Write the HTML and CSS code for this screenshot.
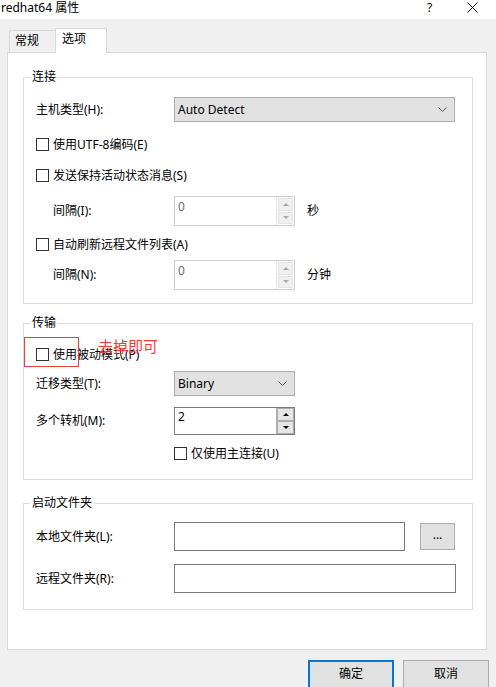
FILE: index.html
```html
<!DOCTYPE html>
<html lang="zh-CN">
<head>
<meta charset="utf-8">
<title>redhat64 属性</title>
<link rel="stylesheet" href="styles.css">
</head>
<body>
<div class="titlebar">
  <span class="title">redhat64 属性</span>
  <span class="help">?</span>
  <span class="close"><svg width="11" height="11" viewBox="0 0 11 11"><path d="M0.5 0.5 L10.5 10.5 M10.5 0.5 L0.5 10.5" stroke="#000" stroke-width="1" fill="none"/></svg></span>
</div>
<div class="tabs">
  <div class="tab">常规</div>
  <div class="tab active">选项</div>
</div>
<div class="panel">
  <div class="group g1">
    <div class="legend">连接</div>
    <div class="row r-a">
      <span class="lbl">主机类型(H):</span>
      <div class="combo combo-wide"><span>Auto Detect</span><svg class="chev" width="9" height="5" viewBox="0 0 9 5"><path d="M0.5 0.5 L4.5 4.5 L8.5 0.5" stroke="#555" fill="none"/></svg></div>
    </div>
    <div class="row chk r-b"><span class="cb"></span><span>使用UTF-8编码(E)</span></div>
    <div class="row chk r-c"><span class="cb"></span><span>发送保持活动状态消息(S)</span></div>
    <div class="row sub r-d">
      <span class="lbl2">间隔(I):</span>
      <div class="spin disabled"><div class="spin-text">0</div><div class="spin-btns"><span class="sb up"></span><span class="sb down"></span></div></div>
      <span class="unit">秒</span>
    </div>
    <div class="row chk r-e"><span class="cb"></span><span>自动刷新远程文件列表(A)</span></div>
    <div class="row sub r-f">
      <span class="lbl2">间隔(N):</span>
      <div class="spin disabled"><div class="spin-text">0</div><div class="spin-btns"><span class="sb up"></span><span class="sb down"></span></div></div>
      <span class="unit">分钟</span>
    </div>
  </div>

  <div class="group g2">
    <div class="legend">传输</div>
    <div class="row chk r-p"><span class="cb"></span><span>使用被动模式(P)</span></div>
    <div class="row r-t">
      <span class="lbl">迁移类型(T):</span>
      <div class="combo combo-small"><span>Binary</span><svg class="chev" width="9" height="5" viewBox="0 0 9 5"><path d="M0.5 0.5 L4.5 4.5 L8.5 0.5" stroke="#555" fill="none"/></svg></div>
    </div>
    <div class="row r-m">
      <span class="lbl">多个转机(M):</span>
      <div class="spin enabled"><div class="spin-text">2</div><div class="spin-btns"><span class="sb up"></span><span class="sb down"></span></div></div>
    </div>
    <div class="row chk r-u"><span class="cb"></span><span>仅使用主连接(U)</span></div>
    <div class="note-box"></div>
    <div class="note-text">去掉即可</div>
  </div>

  <div class="group g3">
    <div class="legend">启动文件夹</div>
    <div class="row r-l">
      <span class="lbl">本地文件夹(L):</span>
      <div class="field field-l"></div>
      <button class="browse">...</button>
    </div>
    <div class="row r-r">
      <span class="lbl">远程文件夹(R):</span>
      <div class="field field-r"></div>
    </div>
  </div>
</div>
<div class="buttons">
  <button class="btn primary">确定</button>
  <button class="btn">取消</button>
</div>
</body>
</html>
```

FILE: styles.css
```css
* { box-sizing: border-box; }
html, body { margin: 0; padding: 0; }
body {
  width: 496px;
  height: 687px;
  overflow: hidden;
  background: #f0f0f0;
  font-family: "Noto Sans", "Noto Sans CJK SC", sans-serif;
  font-size: 12px;
  line-height: 16px;
  color: #000;
}

.titlebar {
  height: 19px;
  background: #fff;
  display: flex;
  align-items: center;
  padding-left: 1px;
}
.title { flex: 1; margin-top: -3px; }
.help { width: 14px; margin-right: 26px; margin-top: -4px; font-size: 12px; }
.close { width: 11px; margin-right: 18px; margin-top: -5px; display: flex; }

.tabs {
  display: flex;
  align-items: flex-end;
  margin: 9px 0 0 9px;
  height: 24px;
  position: relative;
  z-index: 1;
}
.tab {
  height: 22px;
  width: 46px;
  border: 1px solid #d9d9d9;
  border-right: none;
  border-bottom: none;
  background: #f0f0f0;
  padding: 2px 0 0 5px;
}
.tab.active {
  height: 25px;
  width: 52px;
  border-right: 1px solid #d9d9d9;
  background: #fff;
  margin-bottom: -1px;
  padding: 2px 0 0 6px;
}

.panel {
  margin-left: 7px;
  width: 480px;
  height: 598px;
  background: #fff;
  border: 1px solid #d9d9d9;
  overflow: hidden;
}

.group {
  position: relative;
  margin-left: 15px;
  width: 450px;
  border: 1px solid #dcdcdc;
}
.g1 { margin-top: 24px; height: 227px; }
.g2 { margin-top: 19px; height: 157px; }
.g3 { margin-top: 23px; height: 107px; }

.legend {
  width: fit-content;
  margin: -9px 0 0 6px;
  padding: 0 2px;
  height: 16px;
  background: #fff;
}

.row {
  display: flex;
  align-items: center;
  padding-left: 12px;
}
.lbl { width: 138px; }
.lbl2 { width: 121px; }
.sub { padding-left: 29px; }
.chk { height: 17px; }
.cb {
  width: 13px;
  height: 13px;
  border: 1px solid #333;
  background: #fff;
  margin-right: 4px;
}

.r-a { margin-top: 12px; }
.r-b { margin-top: 14px; }
.r-c { margin-top: 14px; }
.r-d { margin-top: 12px; }
.r-e { margin-top: 10px; }
.r-f { margin-top: 7px; }

.r-p { margin-top: 15px; }
.r-t { margin-top: 8px; }
.r-m { margin-top: 11px; }
.r-u { margin-top: 10px; padding-left: 150px; }

.r-l { margin-top: 11px; }
.r-r { margin-top: 13px; }

.combo {
  height: 25px;
  background: #e1e1e1;
  border: 1px solid #adadad;
  display: flex;
  align-items: center;
  padding: 0 7px 0 3px;
}
.combo span { flex: 1; }
.combo-wide { width: 281px; }
.combo-small { width: 121px; }
.chev { display: block; }

.spin {
  display: flex;
  width: 121px;
  height: 30px;
  border: 1px solid #cccccc;
  background: #fff;
}
.spin.enabled { height: 28px; border-color: #7a7a7a; }
.spin-text {
  flex: 1;
  padding: 2px 0 0 3px;
  color: #6d6d6d;
}
.spin.enabled .spin-text { color: #000; padding-top: 1px; }
.spin-btns {
  width: 18px;
  display: flex;
  flex-direction: column;
  gap: 1px;
  padding: 1px;
  border-left: 1px solid #e3e3e3;
  background: #fff;
}
.spin.enabled .spin-btns { border-left-color: #b0b0b0; padding: 0; gap: 0; }
.sb {
  flex: 1;
  display: flex;
  align-items: center;
  justify-content: center;
  background: #f0f0f0;
  border: 1px solid #e3e3e3;
}
.spin.enabled .sb { background: #e5e5e5; border-color: #adadad; }
.sb::before {
  content: "";
  width: 0;
  height: 0;
  border-left: 3px solid transparent;
  border-right: 3px solid transparent;
}
.sb.up::before { border-bottom: 3px solid #a8a8a8; }
.sb.down::before { border-top: 3px solid #a8a8a8; }
.spin.enabled .sb.up::before { border-bottom-color: #000; }
.spin.enabled .sb.down::before { border-top-color: #000; }

.unit { margin-left: 12px; }

.field {
  height: 29px;
  border: 1px solid #7a7a7a;
  background: #fff;
}
.field-l { width: 231px; }
.field-r { width: 282px; }
.browse {
  margin-left: 15px;
  width: 35px;
  height: 27px;
  background: #e1e1e1;
  border: 1px solid #adadad;
  font-family: inherit;
  font-size: 12px;
  padding: 0 0 4px;
  color: #000;
}

.note-box {
  position: absolute;
  left: 0;
  top: 13px;
  width: 55px;
  height: 30px;
  border: 1px solid #e8413c;
}
.note-text {
  position: absolute;
  left: 74px;
  top: 14px;
  font-size: 15px;
  line-height: 17px;
  color: #ee3b3b;
}

.buttons {
  display: flex;
  gap: 9px;
  margin: 10px 0 0 308px;
}
.btn {
  width: 86px;
  height: 30px;
  background: #e1e1e1;
  border: 1px solid #adadad;
  font-family: inherit;
  font-size: 12px;
  padding: 0 0 4px;
  color: #000;
}
.btn.primary { border: 2px solid #0078d7; }
```
